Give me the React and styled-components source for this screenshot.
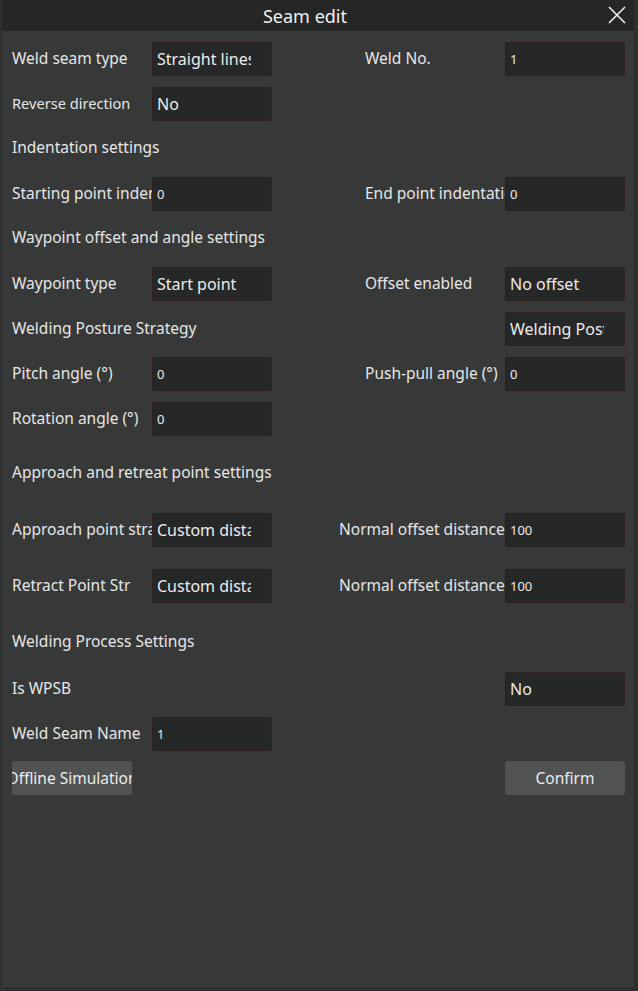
import React from 'react';
import styled, { createGlobalStyle } from 'styled-components';

const Global = createGlobalStyle`
  html, body {
    margin: 0;
    padding: 0;
    background: #2e2f2f;
  }
  body {
    font-family: "Noto Sans", "Open Sans", sans-serif;
  }
`;

const Dialog = styled.div`
  width: 632px;
  height: 987px;
  margin-left: 2px;
  background: #373838;
  display: flex;
  flex-direction: column;
  color: #e6e6e6;
`;

const TitleBar = styled.div`
  height: 31px;
  background: #252626;
  display: flex;
  align-items: center;
  justify-content: center;
  padding-right: 26px;
  position: relative;
  font-size: 18px;
  color: #f2f2f2;
`;

const Close = styled.button`
  position: absolute;
  right: 6px;
  top: 4px;
  width: 22px;
  height: 22px;
  padding: 0;
  border: none;
  background: transparent;
  cursor: pointer;
`;

const Body = styled.div`
  display: flex;
  flex-direction: column;
  gap: 11px;
  padding: 11px 9px 0 10px;
`;

const Row = styled.div`
  display: grid;
  grid-template-columns: 140px 120px 1fr ${(p) => p.$rightWidth || 140}px 120px;
  align-items: center;
  height: 34px;
  margin-top: ${(p) => p.$mt || 0}px;
`;

const Label = styled.div`
  font-size: ${(p) => (p.$small ? 14.6 : 15.5)}px;
  white-space: nowrap;
  overflow: hidden;
  margin-top: -2px;
  grid-column: ${(p) => (p.$right ? 4 : p.$wide ? '1 / 4' : 1)};
`;

const Field = styled.div`
  height: 34px;
  box-sizing: border-box;
  background: #262727;
  border: 1px solid #2f1f1f;
  border-radius: 2px;
  padding: 0 ${(p) => (p.$num ? 4 : 20)}px 0 4px;
  display: flex;
  align-items: center;
  font-size: ${(p) => (p.$num ? 13 : 16)}px;
  color: #ececec;
  grid-column: ${(p) => (p.$right ? 5 : 2)};
`;

const Value = styled.span`
  flex: 1;
  min-width: 0;
  white-space: nowrap;
  overflow: hidden;
`;

const Heading = styled.div`
  height: 34px;
  display: flex;
  align-items: center;
  font-size: 15.5px;
  margin-top: ${(p) => (p.$mt || 0) - 2}px;
  margin-bottom: 2px;
`;

const Button = styled.div`
  height: 34px;
  box-sizing: border-box;
  background: #515252;
  border-radius: 3px;
  display: flex;
  align-items: center;
  justify-content: center;
  font-size: 15.5px;
  white-space: nowrap;
  overflow: hidden;
  color: #ececec;
  grid-column: ${(p) => (p.$right ? 5 : 1)};
  width: 120px;
`;

const Input = ({ children, ...rest }) => (
  <Field {...rest}>
    <Value>{children}</Value>
  </Field>
);

export default function App() {
  return (
    <>
      <Global />
      <Dialog>
        <TitleBar>
          Seam edit
          <Close>
            <svg width="22" height="22" viewBox="0 0 22 22">
              <path d="M3 3 L19 19 M19 3 L3 19" stroke="#f0f0f0" strokeWidth="1.6" />
            </svg>
          </Close>
        </TitleBar>
        <Body>
          <Row>
            <Label>Weld seam type</Label>
            <Input>Straight lines</Input>
            <Label $right>Weld No.</Label>
            <Input $right $num>1</Input>
          </Row>
          <Row>
            <Label $small>Reverse direction</Label>
            <Input>No</Input>
          </Row>
          <Heading>Indentation settings</Heading>
          <Row>
            <Label>Starting point indentation</Label>
            <Input $num>0</Input>
            <Label $right>End point indentation</Label>
            <Input $right $num>0</Input>
          </Row>
          <Heading>Waypoint offset and angle settings</Heading>
          <Row>
            <Label>Waypoint type</Label>
            <Input>Start point</Input>
            <Label $right>Offset enabled</Label>
            <Input $right>No offset</Input>
          </Row>
          <Row>
            <Label $wide>Welding Posture Strategy</Label>
            <Input $right>Welding Posture</Input>
          </Row>
          <Row>
            <Label>Pitch angle (°)</Label>
            <Input $num>0</Input>
            <Label $right>Push-pull angle (°)</Label>
            <Input $right $num>0</Input>
          </Row>
          <Row>
            <Label>Rotation angle (°)</Label>
            <Input $num>0</Input>
          </Row>
          <Heading $mt={10}>Approach and retreat point settings</Heading>
          <Row $mt={11} $rightWidth={166}>
            <Label>Approach point strategy</Label>
            <Input>Custom distance</Input>
            <Label $right>Normal offset distance</Label>
            <Input $right $num>100</Input>
          </Row>
          <Row $mt={11} $rightWidth={166}>
            <Label>Retract Point Str</Label>
            <Input>Custom distance</Input>
            <Label $right>Normal offset distance</Label>
            <Input $right $num>100</Input>
          </Row>
          <Heading $mt={12}>Welding Process Settings</Heading>
          <Row $mt={1}>
            <Label>Is WPSB</Label>
            <Input $right>No</Input>
          </Row>
          <Row>
            <Label>Weld Seam Name</Label>
            <Input $num>1</Input>
          </Row>
          <Row $mt={-1}>
            <Button>Offline Simulation</Button>
            <Button $right>Confirm</Button>
          </Row>
        </Body>
      </Dialog>
    </>
  );
}
